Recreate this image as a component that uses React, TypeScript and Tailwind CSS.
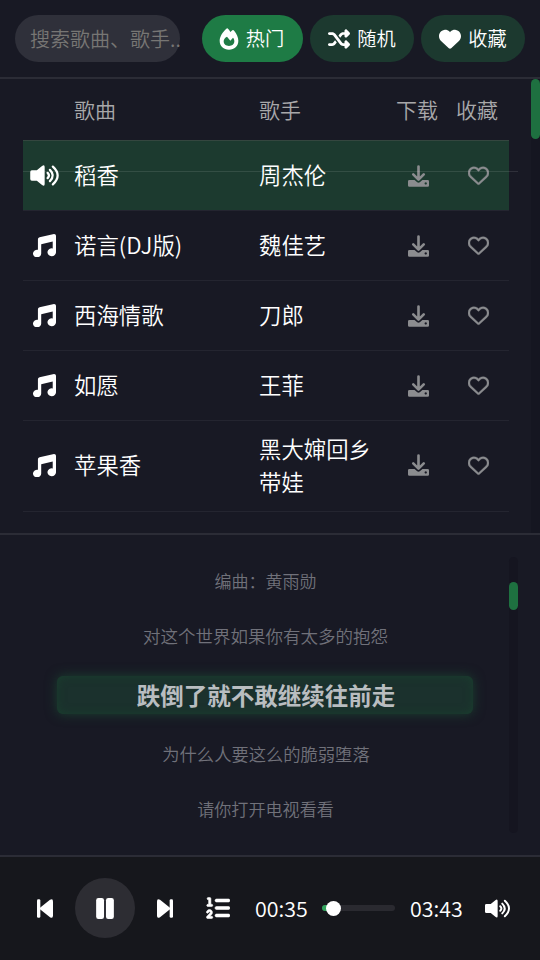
import React, { useState } from 'react';
import { FaHeart, FaListOl, FaRegHeart, FaShuffle } from 'react-icons/fa6';
import clsx from 'clsx';

type IconProps = { className?: string };

const FireIcon = ({ className }: IconProps) => (
  <svg viewBox="0 0 60 66" fill="currentColor" className={className}>
    <path
      fillRule="evenodd"
      d="M24 1Q27 0 34 12L40 7Q43 5 46 9C53 18 58 28 58 38C58 54 46 65 30 65C14 65 2 54 2 38C2 26 12 10 24 1ZM24 26C18 29 14 34 14 40C14 49 21 54 30 54C39 54 46 49 46 40C46 36 45 32 42 29L34 38Z"
    />
  </svg>
);

const MusicIcon = ({ className }: IconProps) => (
  <svg viewBox="0 0 70 70" fill="currentColor" className={className}>
    <path d="M15 16Q15 11 20 10L64 0Q70 0 70 5V55A13 12 0 1 1 60 44V23L25 31V59A12.5 11.5 0 1 1 15 48Z" />
  </svg>
);

const DownloadIcon = ({ className }: IconProps) => (
  <svg viewBox="0 0 64 66" fill="currentColor" className={className}>
    <path d="M32 4V43M16 28L32 44L48 28" fill="none" stroke="currentColor" strokeWidth="8" strokeLinecap="round" strokeLinejoin="round" />
    <path fillRule="evenodd" d="M4 45H20L28 52Q32 55 36 52L44 45H60Q64 45 64 49V62Q64 66 60 66H4Q0 66 0 62V49Q0 45 4 45ZM54 52a3.5 3.5 0 1 0 0.1 0Z" />
  </svg>
);

const VolumeIcon = ({ className }: IconProps) => (
  <svg viewBox="0 0 87 64" fill="currentColor" className={className}>
    <path d="M5 16H20L36 3Q44 -3 44 6V58Q44 67 36 61L20 48H5Q0 48 0 43V21Q0 16 5 16Z" />
    <path d="M53 24Q61 32 53 40M60 15Q77 32 60 49M69 5Q98 32 69 59" fill="none" stroke="currentColor" strokeWidth="7" strokeLinecap="round" />
  </svg>
);

const StepIcon = ({ className }: IconProps) => (
  <svg viewBox="0 0 48 56" fill="currentColor" className={className}>
    <rect width="10" height="56" rx="4" />
    <path d="M10 25L39 2Q48 -3 48 7V49Q48 59 39 54L10 31Q7 28 10 25Z" />
  </svg>
);

const PauseIcon = ({ className }: IconProps) => (
  <svg viewBox="0 0 54 64" fill="currentColor" className={className}>
    <rect width="24" height="64" rx="7" />
    <rect x="30" width="24" height="64" rx="7" />
  </svg>
);

const songs = [
  { name: '稻香', artist: '周杰伦' },
  { name: '诺言(DJ版)', artist: '魏佳艺' },
  { name: '西海情歌', artist: '刀郎' },
  { name: '如愿', artist: '王菲' },
  { name: '苹果香', artist: '黑大婶回乡带娃' },
];

const tabs = [
  { id: 'hot', label: '热门', icon: FireIcon },
  { id: 'random', label: '随机', icon: FaShuffle },
  { id: 'fav', label: '收藏', icon: FaHeart },
];

export default function App() {
  const [tab, setTab] = useState('hot');
  const [current, setCurrent] = useState(0);

  return (
    <div className="w-[540px] h-[960px] flex flex-col overflow-hidden bg-[#181924] text-white font-[350] font-['Noto_Sans_CJK_SC',sans-serif]">
      <header className="h-[79px] shrink-0 flex items-start pt-[15px] pl-[15px] border-b-2 border-[#2b2c36]">
        <div className="w-[165px] h-[47px] rounded-full bg-[#2f303a] pl-[15px] flex items-center whitespace-nowrap text-[20px] text-[#777674]">
          搜索歌曲、歌手..
        </div>
        <div className="flex gap-[7px] ml-[22px]">
          {tabs.map((t) => (
            <button
              key={t.id}
              onClick={() => setTab(t.id)}
              className={clsx(
                'h-[47px] rounded-full flex items-center justify-center gap-[7px] text-[19.2px]',
                t.id === 'hot' ? 'w-[101px] pr-[2px]' : 'w-[104px]',
                tab === t.id ? 'bg-[#1e7b45]' : 'bg-[#1c392f]'
              )}
            >
              <t.icon className={t.id === 'hot' ? 'w-[20px] h-[22px]' : 'size-[22px]'} />
              {t.label}
            </button>
          ))}
        </div>
      </header>

      <main className="relative h-[456px] shrink-0 flex border-b-2 border-[#2b2c36]">
        <div className="w-[486px] ml-[23px] text-[22.4px] leading-[33px]">
          <div className="h-[62px] flex items-center border-b border-[#34463f] text-[21px] text-[#a8a8aa]">
            <span className="w-[185px] ml-[51px]">歌曲</span>
            <span className="w-[129px]">歌手</span>
            <span className="w-[60px] ml-[8px]">下载</span>
            <span className="whitespace-nowrap">收藏</span>
          </div>
          {songs.map((s, i) => (
            <div
              key={s.name}
              onClick={() => setCurrent(i)}
              className={clsx(
                'flex items-center border-b border-[#242530]',
                i === songs.length - 1 ? 'h-[91px] pb-[2px]' : 'h-[70px]',
                current === i && 'bg-[#1c3a2f]'
              )}
            >
              <span className="w-[43px] flex justify-center">
                {current === i ? <VolumeIcon className="w-[29px] h-[21px]" /> : <MusicIcon className="size-[23px]" />}
              </span>
              <span className="w-[185px] ml-[8px] pb-[2px]">{s.name}</span>
              <span className={clsx('w-[117px]', i < songs.length - 1 && 'pb-[2px]')}>{s.artist}</span>
              <span className="w-[84px] flex justify-center text-[#8b8c8f]">
                <DownloadIcon className="w-[21px] h-[22px]" />
              </span>
              <span className="w-[37px] flex justify-center text-[#8b8c8f]">
                <FaRegHeart className="size-[21px]" stroke="currentColor" strokeWidth="8" />
              </span>
            </div>
          ))}
        </div>
        <div className="absolute left-[23px] top-[92px] w-[495px] h-px bg-white/10" />
        <div className="ml-auto w-[9px] bg-[#151621]">
          <div className="h-[60px] rounded-full bg-[#1e7040]" />
        </div>
      </main>

      <section className="h-[322px] shrink-0 flex border-b-2 border-[#2b2c36]">
        <div className="w-[416px] ml-[57px] pt-[32px] text-center text-[17px] leading-[28px] text-[#70717a]">
          <p className="pl-px">编曲：黄雨勋</p>
          <p className="mt-[27px] pl-px text-[17.5px]">对这个世界如果你有太多的抱怨</p>
          <p className="mt-[26px] h-[38px] pl-[2px] rounded-[6px] bg-[#1b312d] shadow-[0_0_12px_#1a4030,inset_0_0_10px_#1a3f2e] text-[23.5px] leading-[38px] font-bold text-[#b9bdc0]">
            跌倒了就不敢继续往前走
          </p>
          <p className="mt-[26px] pl-[2px] text-[17.3px]">为什么人要这么的脆弱堕落</p>
          <p className="mt-[27px] pl-px text-[17.1px]">请你打开电视看看</p>
        </div>
        <div className="ml-[36px] my-[22px] w-[9px] bg-[#151520] rounded-full pt-[25px]">
          <div className="h-[28px] rounded-full bg-[#1e7040]" />
        </div>
      </section>

      <footer className="flex-1 flex items-center bg-[#16171c] pl-[37px] pb-[1px] text-[21.4px]">
        <StepIcon className="w-[16px] h-[19px]" />
        <button className="size-[60px] ml-[22px] rounded-full bg-[#2d2d33] flex items-center justify-center">
          <PauseIcon className="w-[18px] h-[21px]" />
        </button>
        <StepIcon className="w-[16px] h-[19px] ml-[22px] -scale-x-100" />
        <FaListOl className="size-[24px] ml-[33px]" stroke="currentColor" strokeWidth="12" />
        <span className="w-[52px] ml-[25px]">00:35</span>
        <div className="relative w-[73px] h-[6px] ml-[15px] rounded-full bg-[#2a2a30]">
          <div className="w-[12px] h-[6px] rounded-full bg-[#31a35c]" />
          <div className="absolute left-[4px] -top-[4px] size-[15px] rounded-full bg-white" />
        </div>
        <span className="w-[52px] ml-[15px]">03:43</span>
        <VolumeIcon className="w-[25px] h-[19px] ml-[23px]" />
      </footer>
    </div>
  );
}
